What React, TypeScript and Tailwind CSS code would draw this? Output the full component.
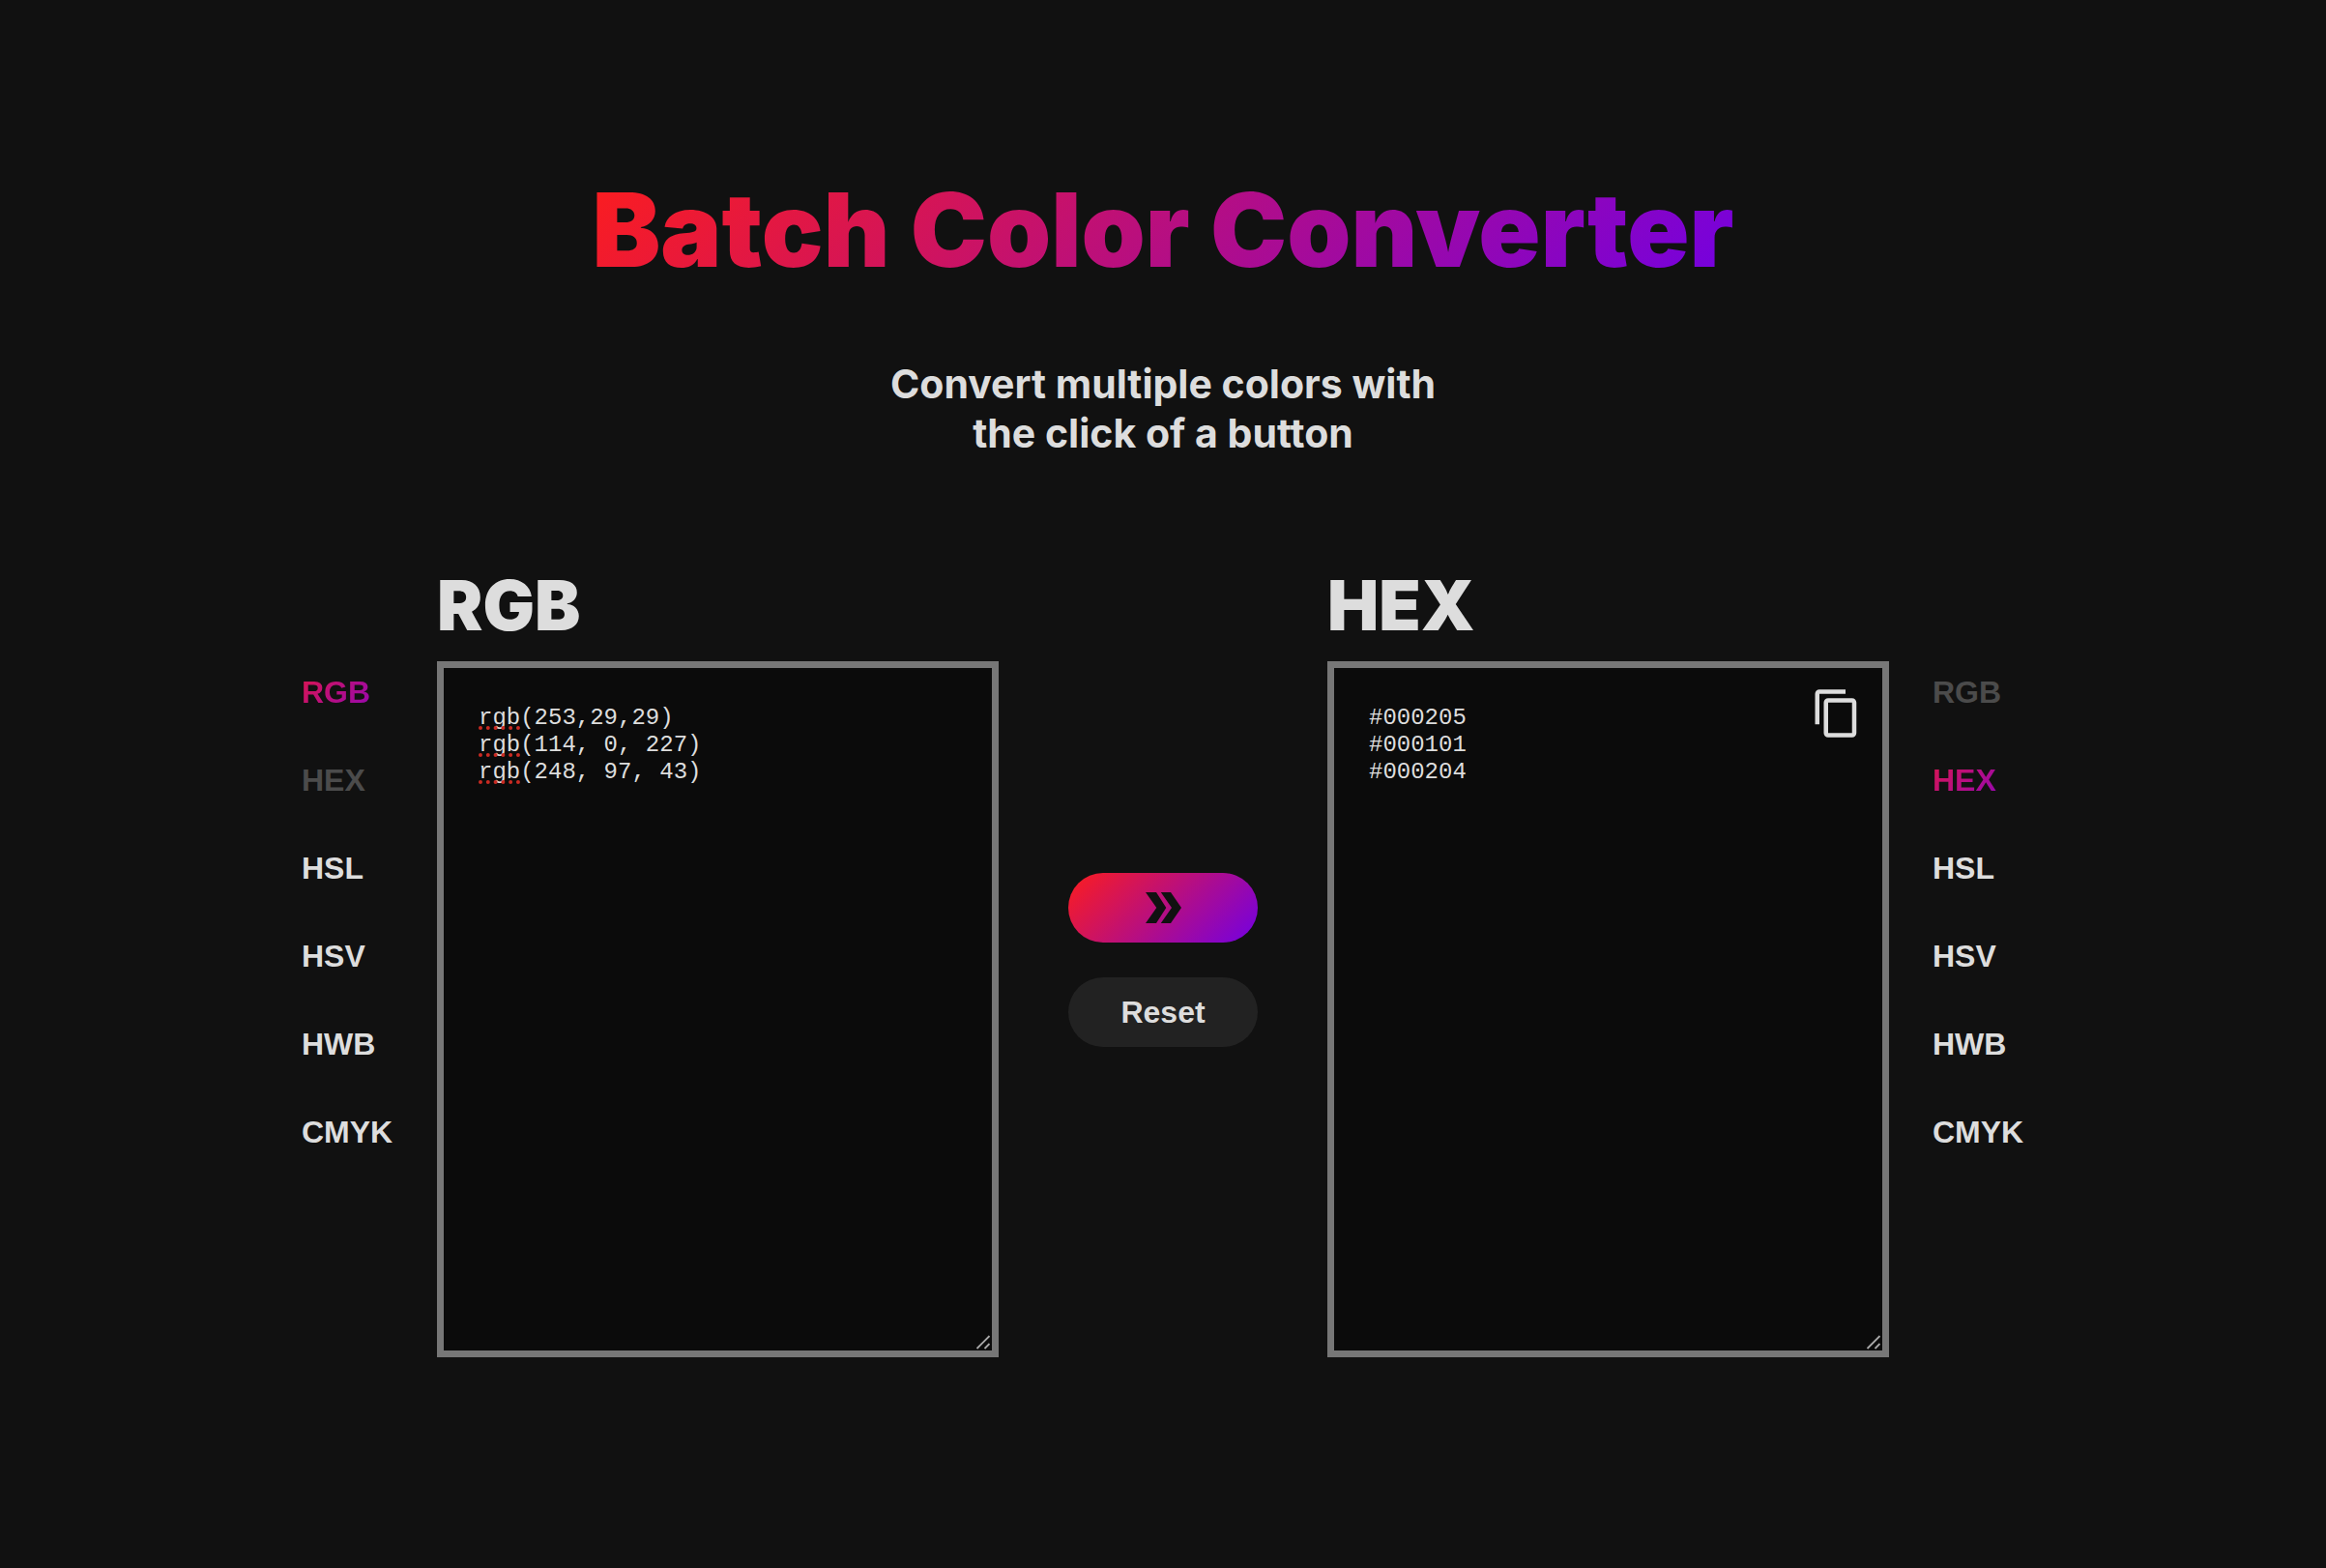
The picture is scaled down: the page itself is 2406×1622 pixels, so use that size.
import { useState } from "react";

const FORMATS = ["RGB", "HEX", "HSL", "HSV", "HWB", "CMYK"];

type FormatListProps = {
  label: string;
  selected: string;
  disabled: string;
  onSelect: (format: string) => void;
};

function FormatList({ label, selected, disabled, onSelect }: FormatListProps) {
  return (
    <nav aria-label={label} className="flex w-[149px] shrink-0 flex-col items-start pt-[90px]">
      {FORMATS.map((format) => {
        const tone =
          format === selected
            ? "bg-linear-[135deg,#fd1d1d,#7200e3] bg-clip-text text-transparent"
            : format === disabled
              ? "text-[#4b4b4b]"
              : "text-[#dddddd]";
        return (
          <button
            key={format}
            type="button"
            disabled={format === disabled}
            aria-pressed={format === selected}
            onClick={() => onSelect(format)}
            className={`h-[91px] px-[27px] text-[32px] font-bold ${tone}`}
          >
            {format}
          </button>
        );
      })}
    </nav>
  );
}

function ResizeGrip() {
  return (
    <svg
      width="16"
      height="16"
      viewBox="0 0 16 16"
      fill="none"
      stroke="#a8a8a8"
      strokeWidth="1.8"
      aria-hidden="true"
      className="pointer-events-none absolute right-2 bottom-2"
    >
      <path d="M1.5 15L14.5 2M9.5 15L14.5 10" />
    </svg>
  );
}

const AREA_CLASS =
  "block h-[720px] w-full resize-none overflow-hidden border-[7px] border-[#777777] bg-[#0b0b0b] px-9 pt-[38px] pb-9 font-['Liberation_Mono',monospace] text-[24px] leading-7 text-[#dddddd] outline-none";

const HEADING_CLASS =
  "block h-[104px] pt-[2px] font-['Inter',sans-serif] text-[71px] leading-[88px] font-black text-[#dddddd]";

export default function App() {
  const [from, setFrom] = useState("RGB");
  const [to, setTo] = useState("HEX");
  const [input, setInput] = useState("rgb(253,29,29)\nrgb(114, 0, 227)\nrgb(248, 97, 43)");
  const [output, setOutput] = useState("#000205\n#000101\n#000204");

  return (
    <main className="min-h-screen bg-[#111111] px-8 pt-[174px] pb-[200px] font-['Liberation_Sans',sans-serif] text-[#dddddd]">
      <header className="flex flex-col items-center text-center font-['Inter',sans-serif]">
        <h1 className="bg-linear-[135deg,#fd1d1d,#7200e3] bg-clip-text text-[106px] leading-[128px] font-black text-transparent">
          Batch Color Converter
        </h1>
        <p className="mt-[70px] text-[41px] leading-[51px] font-bold">
          Convert multiple colors with
          <br />
          the click of a button
        </p>
      </header>

      <div className="mx-auto mt-[106px] flex w-full max-w-[1836px] items-start">
        <FormatList label="Convert from" selected={from} disabled={to} onSelect={setFrom} />

        <section className="ml-[18px] min-w-0 flex-1">
          <label htmlFor="source" className={HEADING_CLASS}>
            {from}
          </label>
          <div className="relative">
            <textarea
              id="source"
              spellCheck={false}
              value={input}
              onChange={(e) => setInput(e.target.value)}
              className={AREA_CLASS}
            />
            {/* Spelling marks under the function name of each line */}
            <div
              aria-hidden="true"
              className="pointer-events-none absolute top-[43px] left-[43px] font-['Liberation_Mono',monospace] text-[24px]"
            >
              {input.split("\n").map((_, i) => (
                <div key={i} className="flex h-7 items-end">
                  <span className="w-[3ch] border-b-4 border-dotted border-[#c92a22]" />
                </div>
              ))}
            </div>
            <ResizeGrip />
          </div>
        </section>

        <div className="mx-[72px] flex w-[196px] shrink-0 flex-col gap-9 pt-[323px]">
          <button
            type="button"
            aria-label="Convert"
            className="flex h-[72px] items-center justify-center rounded-full bg-linear-[135deg,#fd1d1d,#7200e3]"
          >
            <svg width="37" height="32" viewBox="0 0 37 32" fill="#111111" aria-hidden="true">
              <path d="M0 0H11L21.3 16L11 32H0L11.3 16Z" />
              <path d="M15.8 0H26L37 16L26 32H15.8L27 16Z" />
            </svg>
          </button>
          <button
            type="button"
            onClick={() => {
              setInput("");
              setOutput("");
            }}
            className="h-[72px] rounded-full bg-[#222222] text-[32px] font-bold"
          >
            Reset
          </button>
        </div>

        <section className="mr-[18px] min-w-0 flex-1">
          <label htmlFor="result" className={HEADING_CLASS}>
            {to}
          </label>
          <div className="relative">
            <textarea id="result" spellCheck={false} readOnly value={output} className={AREA_CLASS} />
            <button type="button" aria-label="Copy" className="absolute top-[27px] right-[27px]">
              <svg width="54" height="54" viewBox="0 0 24 24" fill="#dddddd" aria-hidden="true">
                <path d="M16 1H4c-1.1 0-2 .9-2 2v14h2V3h12V1zm3 4H8c-1.1 0-2 .9-2 2v14c0 1.1.9 2 2 2h11c1.1 0 2-.9 2-2V7c0-1.1-.9-2-2-2zm0 16H8V7h11v14z" />
              </svg>
            </button>
            <ResizeGrip />
          </div>
        </section>

        <FormatList label="Convert to" selected={to} disabled={from} onSelect={setTo} />
      </div>
    </main>
  );
}
